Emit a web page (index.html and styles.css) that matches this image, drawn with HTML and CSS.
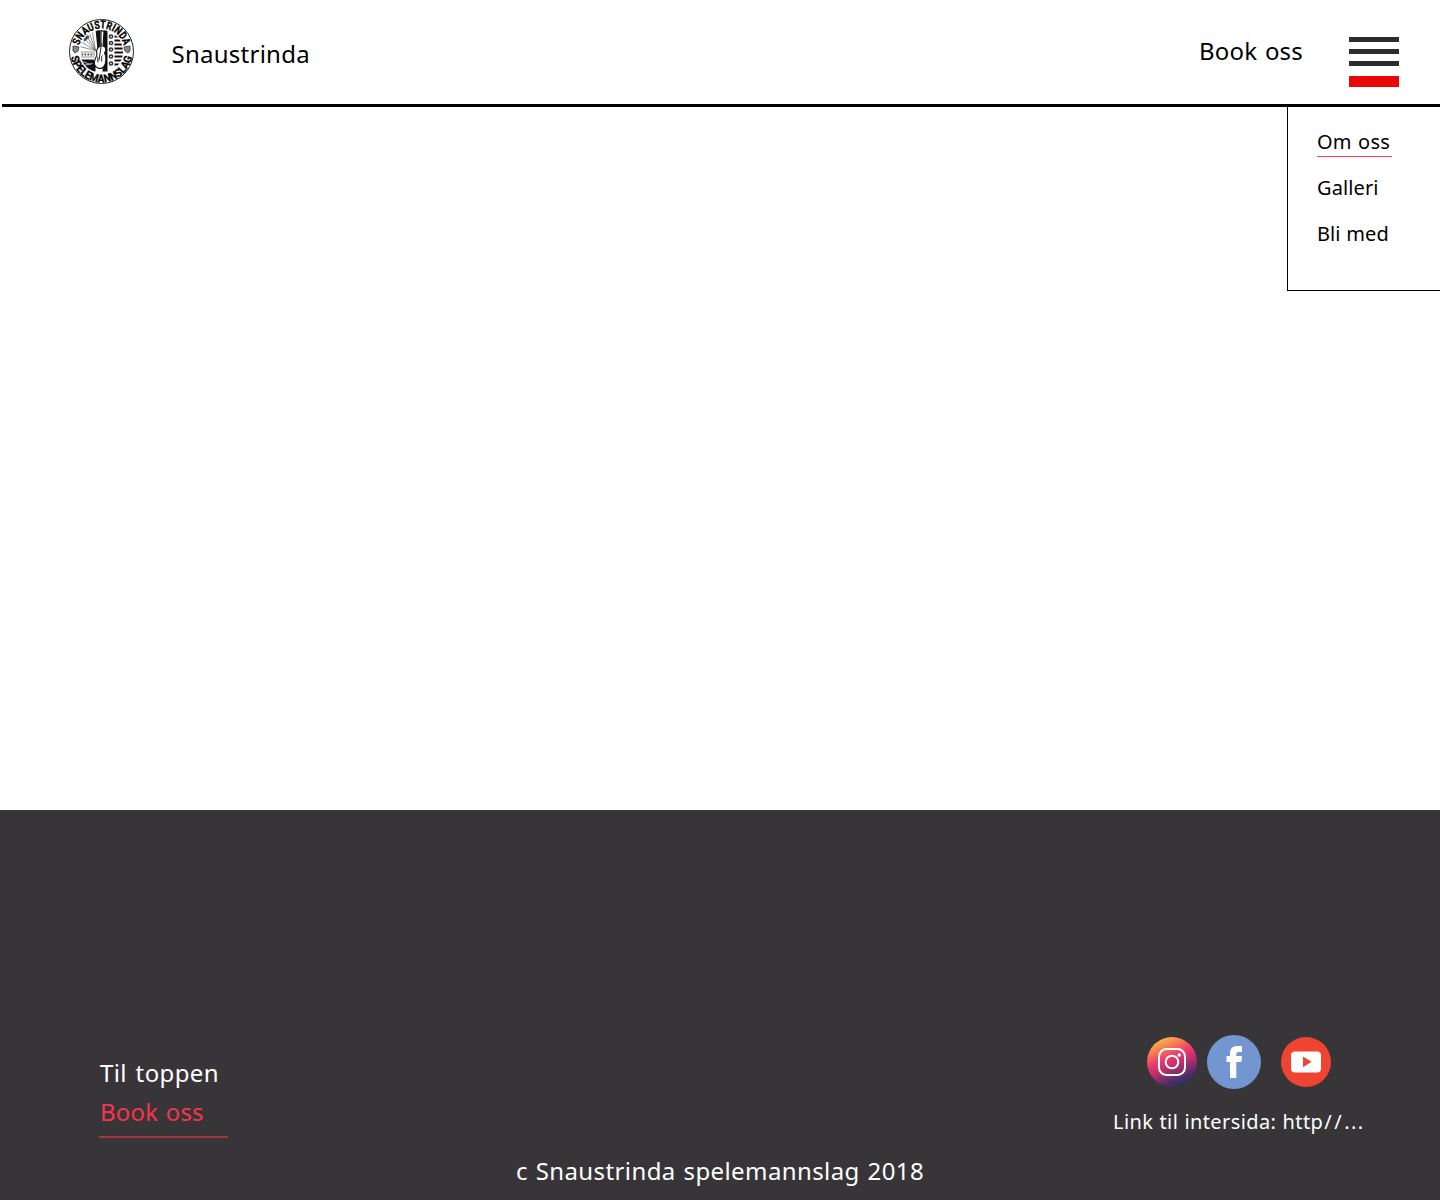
FILE: index.html
```html
<!DOCTYPE html>
<html lang="no">
<head>
<meta charset="utf-8">
<title>Snaustrinda</title>
<link rel="stylesheet" href="styles.css">
</head>
<body>
<header class="header">
  <a class="logo" href="#">
    <svg width="66" height="66" viewBox="0.5 0.5 66 66">
      <defs>
        <path id="ring-top" d="M10 33A23 23 0 0 1 56 33"/>
        <path id="ring-bottom" d="M2 33A31 31 0 0 0 64 33"/>
        <clipPath id="disc"><circle cx="33" cy="33" r="21.500"/></clipPath>
      </defs>
      <circle cx="33" cy="33" r="32" fill="#fff" stroke="#222" stroke-width="1"/>
      <g clip-path="url(#disc)">
        <path fill="#111" d="M27 11h5v15l-3 5zM35 11h4v42h-5zM12 41h13l2 4v8H12z"/>
        <path fill="#444" d="M13 19l5-5 3 5-5 4z"/>
        <path fill="none" stroke="#666" stroke-width=".7" d="M27 32L15 19M27 32l-9-15M27 32l-6-17M27 32l-3-18M27 32L12 23M27 32L11 28M12 33.500h15M12 38.500h14"/>
        <path stroke="#555" stroke-width="2" stroke-dasharray="1.800 1.200" d="M13 36h13"/>
        <path stroke="#bbb" stroke-width="1" d="M14 43l8 3M15 47l9-2"/>
        <path stroke="#111" stroke-width="2" d="M46 18h9M46 22h9M46 26h9M46 30h9M46 34h9M46 38h9M46 42h9M46 46h9"/>
        <g fill="none" stroke="#333" stroke-width="1.500">
          <circle cx="42.500" cy="18" r="1.600"/><circle cx="42.500" cy="24.500" r="1.600"/><circle cx="42.500" cy="31" r="1.600"/><circle cx="42.500" cy="38" r="1.600"/><circle cx="42.500" cy="45" r="1.600"/>
        </g>
        <path fill="#fff" stroke="#111" stroke-width="1.100" d="M32.500 12l3 1-1 14.500c4 1 3 5 1.500 7 2 3 2 11-1 14-3 2.500-8 1.500-9-2.500-1-5 2-7 2.500-10-1-3 0-8 4-8.500z"/>
        <path fill="none" stroke="#222" stroke-width="1" d="M33 25l-2.500 17M28.500 38c2 1 0 4 1 6m4.500-7c-2 1 0 4-1 6"/>
      </g>
      <path fill="#888" stroke="#333" stroke-width=".8" d="M4.500 27.500l6 1-1 4-3 2-2-2zM61.500 27.500l-6 1 1 4 3 2 2-2z"/>
      <text class="seal"><textPath href="#ring-top" startOffset="50%" text-anchor="middle" textLength="60" lengthAdjust="spacingAndGlyphs">SNAUSTRINDA</textPath></text>
      <text class="seal"><textPath href="#ring-bottom" startOffset="50%" text-anchor="middle" textLength="86" lengthAdjust="spacingAndGlyphs">SPELEMANNSLAG</textPath></text>
    </svg>
  </a>
  <div class="brand">Snaustrinda</div>
  <a class="book" href="#">Book oss</a>
  <div class="burger"><i></i><i></i><i></i><b></b></div>
</header>
<main class="main">
  <nav class="menu">
    <a href="#"><span class="active">Om oss</span></a>
    <a href="#"><span>Galleri</span></a>
    <a href="#"><span>Bli med</span></a>
  </nav>
</main>
<footer class="footer">
  <div class="columns">
    <div class="links">
      <a class="top" href="#">Til toppen</a>
      <a class="book-red" href="#">Book oss</a>
    </div>
    <div class="social">
      <div class="icons">
        <svg width="50" height="50" viewBox="0 0 50 50">
          <defs><linearGradient id="insta" x1=".25" y1="0" x2=".68" y2="1"><stop offset="0" stop-color="#ffc04a"/><stop offset=".2" stop-color="#f7814f"/><stop offset=".42" stop-color="#ea3a6c"/><stop offset=".58" stop-color="#c22f6b"/><stop offset=".85" stop-color="#4b2e68"/><stop offset="1" stop-color="#233164"/></linearGradient></defs>
          <circle cx="25" cy="25" r="25" fill="url(#insta)"/>
          <g fill="none" stroke="#fff" stroke-width="2"><rect x="12" y="12" width="26" height="26" rx="7.500"/><circle cx="25" cy="25" r="6.300"/></g>
          <circle cx="32.200" cy="18" r="1.700" fill="#fff"/>
        </svg>
        <svg width="54" height="54" viewBox="0 0 54 54">
          <circle cx="27" cy="27" r="27" fill="#7395d0"/>
          <path fill="#fff" d="M23 43V27h-3.500v-6H23v-2.500C23 13.500 25.500 11 30.500 11H35v6h-3c-2 0-2.700.7-2.700 2.500V21H35l-.7 6h-5v16z"/>
        </svg>
        <svg class="youtube" width="50" height="50" viewBox="0 0 50 50">
          <circle cx="25" cy="25" r="25" fill="#f04432"/>
          <rect x="10" y="14.500" width="30" height="21" rx="4" fill="#fff"/>
          <path fill="#f04432" d="M22 19.500l8.500 5.200-8.500 5.600z"/>
        </svg>
      </div>
      <div class="site">Link til intersida: http<span class="slashes">//</span><span class="dots">...</span></div>
    </div>
  </div>
  <div class="copy">c Snaustrinda spelemannslag 2018</div>
</footer>
</body>
</html>
```
FILE: styles.css
```css
* { box-sizing: border-box; }
body {
  margin: 0;
  background: #fff;
  color: #000;
  font: 24px/32px "Noto Sans", sans-serif;
  white-space: nowrap;
}
a { color: inherit; text-decoration: none; }
svg { display: block; }

.header {
  display: flex;
  align-items: flex-start;
  height: 107px;
  margin-left: 2px;
  padding-left: 67px;
  padding-right: 41px;
  border-bottom: 3px solid #000;
}
.logo { margin-top: 19px; }
.seal { font: bold 11px/1 "Roboto", sans-serif; fill: #000; stroke: #000; stroke-width: .3px; }
.brand { margin: 38px auto 0 36.5px; letter-spacing: .25px; }
.book { margin-top: 35px; margin-right: 46px; letter-spacing: .2px; word-spacing: 1.2px; }
.burger { display: flex; flex-direction: column; gap: 7px; width: 50px; margin-top: 37px; }
.burger i { height: 5px; background: #2d2d2d; }
.burger b { height: 11px; margin-top: 3px; background: #e90606; }

.main { display: flex; justify-content: flex-end; align-items: flex-start; height: 703px; }
.menu {
  width: 153px;
  height: 184px;
  padding: 12px 0 0 29px;
  border-left: 1px solid #000;
  border-bottom: 1px solid #000;
  font-size: 20px;
}
.menu a { display: block; height: 46px; line-height: 46px; }
.menu span { display: inline-block; letter-spacing: .1px; word-spacing: .4px; }
.menu .active { width: 75px; height: 38px; border-bottom: 1px solid #ff3b50; letter-spacing: .2px; word-spacing: 1px; }

.footer { height: 390px; padding-top: 225px; background: #383538; color: #fff; }
.columns { display: flex; justify-content: space-between; height: 120px; padding: 0 75px 0 99px; }
.links { display: flex; flex-direction: column; gap: 7px; padding-top: 22px; }
.links a { padding-left: 1px; letter-spacing: .4px; word-spacing: 2px; }
.links .book-red { width: 129px; height: 42px; color: #f5354c; border-bottom: 2px solid #a5353f; letter-spacing: .2px; word-spacing: 1px; }
.social { width: 252px; }
.icons { display: flex; align-items: center; gap: 10px; padding-left: 34px; }
.youtube { margin-left: 10px; }
.site { margin-top: 17px; font-size: 20px; letter-spacing: .4px; word-spacing: .6px; }
.slashes { margin-left: 1px; letter-spacing: 2.6px; }
.dots { letter-spacing: 1.4px; }
.copy { text-align: center; letter-spacing: .4px; word-spacing: 1.2px; }
```
